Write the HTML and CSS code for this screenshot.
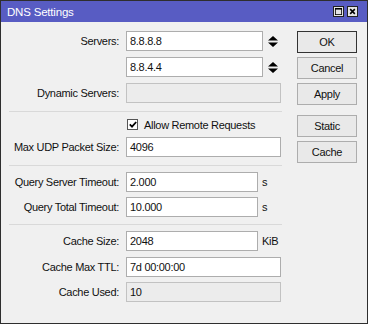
FILE: index.html
```html
<!DOCTYPE html>
<html>
<head>
<meta charset="utf-8">
<link rel="stylesheet" href="styles.css">
</head>
<body>
<div class="window">
  <div class="titlebar">
    <span class="title">DNS Settings</span>
    <div class="tb-btns">
      <span class="tb-btn"><svg width="9" height="9" viewBox="0 0 9 9"><rect x="0.5" y="0.5" width="8" height="8" fill="none" stroke="#000"/><rect x="0" y="0" width="9" height="2" fill="#000"/></svg></span>
      <span class="tb-btn"><svg width="9" height="9" viewBox="0 0 9 9"><path d="M1.5 1.5 L7.5 7.5 M7.5 1.5 L1.5 7.5" stroke="#000" stroke-width="2"/></svg></span>
    </div>
  </div>
  <div class="body">
    <div class="form">
      <div class="section s1">
        <div class="row">
          <span class="lbl">Servers:</span>
          <div class="field"><div class="input w-spin">8.8.8.8</div><svg class="spin" width="10" height="11" viewBox="0 0 10 11"><path d="M5 0 L10 4.5 L0 4.5 Z M0 6.5 L10 6.5 L5 11 Z" fill="#000"/></svg></div>
        </div>
        <div class="row">
          <span class="lbl"></span>
          <div class="field"><div class="input w-spin">8.8.4.4</div><svg class="spin" width="10" height="11" viewBox="0 0 10 11"><path d="M5 0 L10 4.5 L0 4.5 Z M0 6.5 L10 6.5 L5 11 Z" fill="#000"/></svg></div>
        </div>
        <div class="row">
          <span class="lbl">Dynamic Servers:</span>
          <div class="field"><div class="input w-full disabled"></div></div>
        </div>
      </div>
      <div class="sep"></div>
      <div class="section s2">
        <div class="row check-row">
          <span class="lbl"></span>
          <div class="field"><span class="checkbox"><svg width="8" height="7" viewBox="0 0 8 7"><path d="M0.8 3.4 L3 5.6 L7.2 1" fill="none" stroke="#000" stroke-width="1.8"/></svg></span><span class="check-text">Allow Remote Requests</span></div>
        </div>
        <div class="row">
          <span class="lbl">Max UDP Packet Size:</span>
          <div class="field"><div class="input w-full">4096</div></div>
        </div>
      </div>
      <div class="sep"></div>
      <div class="section s3">
        <div class="row">
          <span class="lbl">Query Server Timeout:</span>
          <div class="field"><div class="input w-unit">2.000</div><span class="unit">s</span></div>
        </div>
        <div class="row">
          <span class="lbl">Query Total Timeout:</span>
          <div class="field"><div class="input w-unit">10.000</div><span class="unit">s</span></div>
        </div>
      </div>
      <div class="sep"></div>
      <div class="section s4">
        <div class="row">
          <span class="lbl">Cache Size:</span>
          <div class="field"><div class="input w-unit">2048</div><span class="unit">KiB</span></div>
        </div>
        <div class="row">
          <span class="lbl">Cache Max TTL:</span>
          <div class="field"><div class="input w-full">7d 00:00:00</div></div>
        </div>
        <div class="row">
          <span class="lbl">Cache Used:</span>
          <div class="field"><div class="input w-full disabled">10</div></div>
        </div>
      </div>
    </div>
    <div class="buttons">
      <div class="btn default">OK</div>
      <div class="btn">Cancel</div>
      <div class="btn">Apply</div>
      <div class="btn spaced">Static</div>
      <div class="btn">Cache</div>
    </div>
  </div>
</div>
</body>
</html>
```
FILE: styles.css
```css
* { box-sizing: border-box; }
html, body { margin: 0; padding: 0; }
body {
  font-family: "Liberation Sans", Arial, sans-serif;
  font-size: 11px;
  letter-spacing: -0.3px;
  color: #111;
  background: #f0f0f0;
}
.window {
  width: 368px;
  height: 324px;
  border: 1px solid #2e2e2e;
  background: #f0f0f0;
  display: flex;
  flex-direction: column;
}
.titlebar {
  height: 21px;
  background: #585cc3;
  color: #fff;
  display: flex;
  align-items: center;
  justify-content: space-between;
  padding: 0 9px 0 6px;
  flex: 0 0 auto;
}
.title { font-size: 11.5px; letter-spacing: -0.2px; }
.tb-btns { display: flex; gap: 3px; }
.tb-btn {
  width: 11px;
  height: 11px;
  background: #e4e4e4;
  border: 1px solid #222;
  display: flex;
  align-items: center;
  justify-content: center;
}
.tb-btn svg { display: block; width: 7px; height: 7px; }
.body {
  display: flex;
  flex: 1;
}
.form {
  width: 289px;
  display: flex;
  flex-direction: column;
}
.section {
  display: flex;
  flex-direction: column;
  padding: 6px 0 8px;
  gap: 5px;
}
.s1 { padding-top: 9px; gap: 6px; }
.s2 { gap: 6px; }
.s3 { padding-bottom: 7px; }
.s4 { gap: 5.5px; }
.sep {
  height: 1px;
  background: #d9d9d9;
  margin-left: 8px;
  width: 273px;
}
.row {
  display: grid;
  grid-template-columns: 118px auto;
  column-gap: 7px;
  align-items: center;
  height: 20px;
}
.check-row { height: 13px; }
.lbl { text-align: right; white-space: nowrap; }
.field { display: flex; align-items: center; }
.input {
  height: 20px;
  background: #fff;
  border: 1px solid #adadad;
  padding: 0 3px;
  line-height: 18px;
  white-space: nowrap;
  overflow: hidden;
}
.input.disabled { background: #ececec; border-color: #c2c2c2; }
.w-full { width: 155px; }
.w-spin { width: 137px; }
.w-unit { width: 132px; }
.spin { margin-left: 5px; display: block; }
.unit { margin-left: 4px; }
.checkbox {
  width: 11px;
  height: 11px;
  background: #fff;
  border: 1px solid #555;
  display: flex;
  align-items: center;
  justify-content: center;
  margin-left: 1px;
}
.checkbox svg { display: block; }
.check-text { margin-left: 6px; }
.buttons {
  margin-left: 7px;
  padding-top: 9px;
  display: flex;
  flex-direction: column;
  gap: 4px;
  width: 60px;
}
.btn {
  height: 22px;
  border: 1px solid #adadad;
  background: #e9e9e9;
  display: flex;
  align-items: center;
  justify-content: center;
}
.btn.default { border-color: #333; }
.btn.spaced { margin-top: 6px; }
```
